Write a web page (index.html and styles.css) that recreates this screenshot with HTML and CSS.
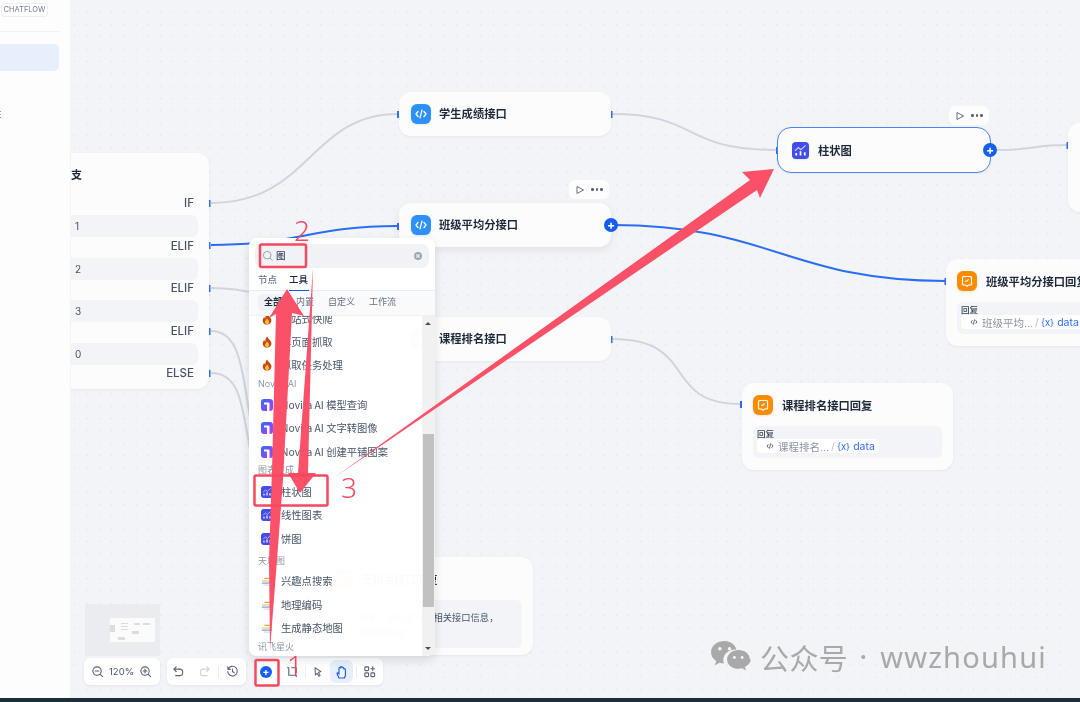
FILE: index.html
```html
<!DOCTYPE html>
<html lang="zh">
<head>
<meta charset="utf-8">
<title>Chatflow</title>
<link rel="stylesheet" href="styles.css">
</head>
<body>
<svg width="0" height="0" class="defs">
  <defs>
    <linearGradient id="nov" x1="0" y1="0" x2="1" y2="1"><stop offset="0" stop-color="#2f6bff"/><stop offset="1" stop-color="#b23cf0"/></linearGradient>
    <symbol id="i-code" viewBox="0 0 20 20"><path d="M7 7.500 5 10l2 2.500M13 7.500l2 2.500-2 2.500M11 6.200 9 13.800" fill="none" stroke="currentColor" stroke-width="1.300" stroke-linecap="round" stroke-linejoin="round"/></symbol>
    <symbol id="i-chart" viewBox="0 0 20 20"><path d="M3.500 10.500 7.500 6.500l3 2.500 5.500-5" fill="none" stroke="#c9d0ff" stroke-width="1.300"/><path d="M4 16v-3h2v3zM9 16v-5h2v5zM14 16v-4h2v4z" fill="#fff"/></symbol>
    <symbol id="i-reply" viewBox="0 0 20 20"><path d="M6.500 5.500h7a1 1 0 0 1 1 1v6.500a1 1 0 0 1-1 1h-2l-1.500 1.300L8.500 14h-2a1 1 0 0 1-1-1V6.500a1 1 0 0 1 1-1z" fill="none" stroke="#fff" stroke-width="1.200"/><path d="M8 10.300h1.800l1.800-2" fill="none" stroke="#fff" stroke-width="1.100"/></symbol>
    <symbol id="i-fire" viewBox="0 0 12 14"><path d="M6.200.5c.6 2.300 3.900 4.200 4.800 7 .8 3-1.600 6-5 6s-5.600-2.700-4.800-5.900c.3-1.200 1-2.100 1.700-2.900.1 1 .5 1.700 1.100 2.100C3.800 4.500 4.700 2 6.200.5z" fill="#c9480f"/><path d="M6.100 6.500c.9 1.200 2.300 2.300 2.300 4 0 1.500-1.100 2.500-2.400 2.500s-2.400-1-2.400-2.500c0-1.700 1.700-2.500 2.500-4z" fill="#ffb93f"/></symbol>
    <symbol id="i-nov" viewBox="0 0 12 12"><rect width="12" height="12" rx="3" fill="url(#nov)"/><path d="M3 3.500h4.500a1 1 0 0 1 1 1V12H6V5.500H3z" fill="#fff"/></symbol>
    <symbol id="i-map" viewBox="0 0 14 12"><path d="M4 3h6" stroke="#f0a33c" stroke-width="1.600"/><path d="M1 6h12" stroke="#f0b667" stroke-width="1.300"/><path d="M1 8.500h12" stroke="#7ea6dc" stroke-width="1.300"/><path d="M3 10.800h8" stroke="#bcd0ea" stroke-width="1"/></symbol>
  </defs>
</svg>
<div class="page">
  <aside class="sidebar">
    <div class="tag-row"><span class="tag">CHATFLOW</span></div>
    <div class="side-rule"></div>
    <div class="side-active"></div>
    <div class="side-clip">E</div>
  </aside>
  <main class="canvas">
    <svg class="edges" viewBox="0 0 1080 702" width="1080" height="702">
      <g fill="none" stroke="#d0d5dd" stroke-width="2">
        <path d="M211 203C310 203 310 114 398 114"/>
        <path d="M211 288C300 288 300 339 398 339"/>
        <path d="M211 331C250 331 240 400 262 470"/>
        <path d="M211 373C250 373 240 430 262 500"/>
        <path d="M612 114C700 114 680 150 777 150"/>
        <path d="M612 339C700 339 660 404 741 404"/>
        <path d="M997 150C1040 150 1030 145 1067 145"/>
      </g>
      <g fill="none" stroke="#2b6cf5" stroke-width="2">
        <path d="M211 245C300 245 310 226 398 226"/>
        <path d="M612 225C770 225 790 281 945 281"/>
      </g>
      <g fill="#2f6df6">
        <rect x="208.500" y="200" width="2" height="7"/><rect x="208.500" y="242" width="2" height="7"/><rect x="208.500" y="285" width="2" height="7"/><rect x="208.500" y="328" width="2" height="7"/><rect x="208.500" y="370" width="2" height="7"/>
        <rect x="397" y="111" width="2" height="7"/><rect x="397" y="223" width="2" height="7"/>
        <rect x="610.500" y="111" width="2" height="7"/><rect x="610.500" y="336" width="2" height="7"/>
        <rect x="776" y="147" width="2" height="7"/><rect x="944.500" y="278" width="2" height="7"/><rect x="740" y="401" width="2" height="7"/><rect x="1066.500" y="142" width="2" height="7"/>
      </g>
    </svg>

    <section class="node node-branch">
      <h3 class="branch-title">支</h3>
      <div class="port">IF</div><div class="cond">1</div>
      <div class="port">ELIF</div><div class="cond">2</div>
      <div class="port">ELIF</div><div class="cond">3</div>
      <div class="port">ELIF</div><div class="cond">0</div>
      <div class="port">ELSE</div>
    </section>

    <section class="node node-row node-student"><span class="ico ico-code"><svg><use href="#i-code"/></svg></span><h3>学生成绩接口</h3></section>
    <section class="node node-row node-avg"><span class="ico ico-code"><svg><use href="#i-code"/></svg></span><h3>班级平均分接口</h3><span class="plus">+</span></section>
    <div class="runbar runbar-avg"><svg viewBox="0 0 10 10"><path d="M2 1.500 8.500 5 2 8.500z" fill="none" stroke="#676f83" stroke-width="1"/></svg><span class="dots"><i></i><i></i><i></i></span></div>
    <section class="node node-row node-rank"><span class="ico ico-code"><svg><use href="#i-code"/></svg></span><h3>课程排名接口</h3></section>
    <section class="node node-row node-bar"><span class="ico ico-chart"><svg><use href="#i-chart"/></svg></span><h3>柱状图</h3><span class="plus">+</span></section>
    <div class="runbar runbar-bar"><svg viewBox="0 0 10 10"><path d="M2 1.500 8.500 5 2 8.500z" fill="none" stroke="#676f83" stroke-width="1"/></svg><span class="dots"><i></i><i></i><i></i></span></div>
    <section class="node node-far"></section>

    <section class="node node-reply node-reply-avg">
      <div class="reply-head"><span class="ico ico-reply"><svg><use href="#i-reply"/></svg></span><h3>班级平均分接口回复</h3></div>
      <div class="reply-body"><div class="reply-label">回复</div><div class="pill"><svg class="pill-ico"><use href="#i-code"/></svg><span>班级平均…</span><em>/</em><b class="var">{x}</b><b>data</b></div></div>
    </section>
    <section class="node node-reply node-reply-rank">
      <div class="reply-head"><span class="ico ico-reply"><svg><use href="#i-reply"/></svg></span><h3>课程排名接口回复</h3></div>
      <div class="reply-body"><div class="reply-label">回复</div><div class="pill"><svg class="pill-ico"><use href="#i-code"/></svg><span>课程排名…</span><em>/</em><b class="var">{x}</b><b>data</b></div></div>
    </section>
    <section class="node node-reply node-reply-none">
      <div class="reply-head"><span class="ico ico-reply"><svg><use href="#i-reply"/></svg></span><h3>无相关接口回复</h3></div>
      <div class="reply-body"><p>抱歉，未能查询到相关接口信息，<br>请稍后再试</p></div>
    </section>

    <div class="minimap"><div class="mini-inner"><i class="m1"></i><i class="m2"></i><i class="m3"></i><i class="m4"></i><i class="m5"></i><i class="m6"></i></div></div>

    <div class="toolbar">
      <div class="tool-panel tp-zoom">
        <svg class="tool" viewBox="0 0 14 14"><circle cx="6.500" cy="6.500" r="4.500"/><path d="M10 10l2.500 2.500M4.500 6.500h4"/></svg>
        <span class="pct">120%</span>
        <svg class="tool" viewBox="0 0 14 14"><circle cx="6.500" cy="6.500" r="4.500"/><path d="M10 10l2.500 2.500M4.500 6.500h4M6.500 4.500v4"/></svg>
      </div>
      <div class="tool-panel tp-hist">
        <svg class="tool" viewBox="0 0 14 14"><path d="M4.500 2 2 4.500 4.500 7M2 4.500h6a3.500 3.500 0 0 1 0 7H4"/></svg>
        <svg class="tool tool-off" viewBox="0 0 14 14"><path d="M9.500 2 12 4.500 9.500 7M12 4.500H6a3.500 3.500 0 0 0 0 7h4"/></svg>
        <span class="sep"></span>
        <svg class="tool" viewBox="0 0 14 14"><path d="M2.200 4.500A5.200 5.200 0 1 1 1.800 7M2 2v2.700h2.700M7 4.500V7l1.800 1.300"/></svg>
      </div>
      <div class="tool-panel tp-ops">
        <span class="add-btn">+</span>
        <svg class="tool" viewBox="0 0 14 14"><path d="M3 3.500V11h7.500M1.500 3H3M11 11v1.500M6 3h5v5"/></svg>
        <span class="sep"></span>
        <svg class="tool tool-sm" viewBox="0 0 14 14"><path d="M3.500 2l7 4.500-3 1 2 3.500-1.500 1-2-3.500-2 2z"/></svg>
        <span class="hand"><svg viewBox="0 0 14 14"><path d="M4 13 2 8.500c.3-1 1.300-.8 2 .2V3.500a.8.800 0 0 1 1.600 0V2.300a.8.800 0 0 1 1.600 0v1a.8.800 0 0 1 1.600.2v1a.8.800 0 0 1 1.600.2V10c0 1.500-.6 2.300-1.200 3z"/></svg></span>
        <span class="sep"></span>
        <svg class="tool" viewBox="0 0 14 14"><rect x="2" y="2" width="4" height="4" rx=".8"/><rect x="2" y="8.500" width="4" height="4" rx=".8"/><rect x="8.500" y="8.500" width="4" height="4" rx=".8"/><path d="M10.500 2v4M8.500 4h4"/></svg>
      </div>
    </div>

    <div class="popup">
      <div class="search">
        <svg class="search-ico" viewBox="0 0 12 12"><circle cx="5.200" cy="5.200" r="3.800"/><path d="M8 8l2.500 2.500"/></svg>
        <span class="search-text">图</span>
        <span class="clear">×</span>
      </div>
      <div class="tabs"><span>节点</span><span class="tab-on">工具</span></div>
      <div class="subtabs"><span class="sub-on">全部</span><span>内置</span><span>自定义</span><span>工作流</span></div>
      <div class="list-wrap">
        <div class="list">
          <div class="row"><svg class="r-ico"><use href="#i-fire"/></svg><span>全站式快爬</span></div>
          <div class="row"><svg class="r-ico"><use href="#i-fire"/></svg><span>单页面抓取</span></div>
          <div class="row"><svg class="r-ico"><use href="#i-fire"/></svg><span>抓取任务处理</span></div>
          <div class="group group-first">Novita AI</div>
          <div class="row"><svg class="r-ico"><use href="#i-nov"/></svg><span>Novita AI 模型查询</span></div>
          <div class="row"><svg class="r-ico"><use href="#i-nov"/></svg><span>Novita AI 文字转图像</span></div>
          <div class="row"><svg class="r-ico"><use href="#i-nov"/></svg><span>Novita AI 创建平铺图案</span></div>
          <div class="group">图表生成</div>
          <div class="row"><span class="r-chart"><svg><use href="#i-chart"/></svg></span><span>柱状图</span></div>
          <div class="row"><span class="r-chart"><svg><use href="#i-chart"/></svg></span><span>线性图表</span></div>
          <div class="row"><span class="r-chart"><svg><use href="#i-chart"/></svg></span><span>饼图</span></div>
          <div class="group group-tall">天地图</div>
          <div class="row"><svg class="r-ico"><use href="#i-map"/></svg><span>兴趣点搜索</span></div>
          <div class="row"><svg class="r-ico"><use href="#i-map"/></svg><span>地理编码</span></div>
          <div class="row"><svg class="r-ico"><use href="#i-map"/></svg><span>生成静态地图</span></div>
          <div class="group">讯飞星火</div>
        </div>
        <div class="scrollbar"><span class="up"></span><span class="thumb"></span><span class="down"></span></div>
      </div>
    </div>

    <div class="watermark">
      <svg class="wechat" viewBox="0 0 42 34"><path d="M15 1C7 1 1 6 1 12.500c0 3.800 2 6.900 5.200 9.100L5 26l4.800-2.500c1.400.4 2.900.6 4.400.6-.4-1.200-.6-2.400-.6-3.600 0-6 5.500-10.800 12.600-10.800h.9C25.800 4.700 20.900 1 15 1z" fill="#a9a9a9"/><path d="M41 20c0-5.300-5.200-9.700-11.700-9.700S17.500 14.700 17.500 20s5.300 9.700 11.800 9.700c1.300 0 2.600-.2 3.800-.5l3.800 2.100-1-3.500c3-1.900 6-4.800 6-7.800z" fill="#a9a9a9"/><circle cx="10" cy="9" r="1.800" fill="#f2f4f7"/><circle cx="20" cy="9" r="1.800" fill="#f2f4f7"/><circle cx="25" cy="18" r="1.500" fill="#f2f4f7"/><circle cx="33" cy="18" r="1.500" fill="#f2f4f7"/></svg>
      <span class="wm-cn">公众号</span><span class="wm-dot">·</span><span class="wm-en">wwzhouhui</span>
    </div>

    <svg class="marks" viewBox="0 0 1080 702" width="1080" height="702">
      <g fill="#fb5168">
        <path d="M287 289 304 316 292 313 283 480 277 560 270 650 269 560 272 470 276 314 269 318z"/>
        <path d="M313 268 308 473 316 473 300 493 288 473 298 473z"/>
        <path d="M335 477 750 180 742 172 774 169 760 198 757 190z"/>
      </g>
      <g fill="none" stroke="#f4485f" stroke-width="2.500">
        <rect x="260" y="244.500" width="46" height="22.500" rx="1.500"/>
        <rect x="254.500" y="475.500" width="73" height="30" rx="1.500"/>
        <rect x="255.500" y="660" width="23" height="25.500" rx="1.500"/>
      </g>
    </svg>
    <span class="num num-2">2</span>
    <span class="num num-3">3</span>
    <span class="num num-1">1</span>
  </main>
  <footer class="taskbar"></footer>
</div>
</body>
</html>
```
FILE: styles.css
```css
* { box-sizing: border-box; }
html, body { margin: 0; padding: 0; }
body {
  width: 1080px; height: 702px; overflow: hidden;
  font-family: "Inter", "Noto Sans CJK SC", sans-serif;
  color: #354052;
}
.defs { position: absolute; }
.page { width: 1080px; height: 702px; display: grid; grid-template-columns: 71px 1fr; grid-template-rows: 698px 4px; filter: blur(.35px); }
.taskbar { grid-column: 1 / 3; background: #1c2f38; }

.sidebar { background: #fdfdfe; border-right: 1px solid #f2f3f5; overflow: hidden; position: relative; z-index: 3; }
.tag-row { height: 32px; padding: 3px 0 0 1px; border-bottom: 1px solid #f0f1f3; width: 60px; }
.tag { display: block; width: 47px; height: 14px; line-height: 13px; border: 1px solid #eceef1; border-radius: 3px; background: #fff; font: 7.500px/12px "Inter", sans-serif; color: #737b8c; text-align: center; }
.side-active { width: 59px; height: 27px; margin-top: 12px; background: #e8effc; border-radius: 0 5px 5px 0; }
.side-clip { margin: 38px 0 0 -4px; font-size: 9px; line-height: 12px; color: #475467; }

.canvas {
  position: relative; overflow: hidden;
  background-color: #f2f4f7;
  background-image: radial-gradient(circle, #dfe2e8 .7px, transparent 1px);
  background-size: 12.320px 12.320px;
  background-position: -2.500px 6px;
  width: 1009px;
}
.edges, .marks { position: absolute; left: -71px; top: 0; pointer-events: none; }
.marks { z-index: 6; }

.node { position: absolute; background: #fcfcfd; border-radius: 12px; box-shadow: 0 1px 3px rgba(16,24,40,.05); }
.node h3 { margin: 0; font-size: 11.300px; font-weight: 600; color: #1d2939; font-family: "Noto Sans CJK SC", sans-serif; white-space: nowrap; }
.node-row { display: flex; align-items: center; gap: 8px; padding: 0 12px; height: 44px; width: 212px; }
.node-row h3 { padding-bottom: 2px; }
.node-student { left: 328px; top: 92px; }
.node-avg { left: 328px; top: 203px; box-shadow: 0 3px 8px rgba(16,24,40,.08); }
.node-rank { left: 328px; top: 317px; }
.node-bar { left: 706px; top: 127px; width: 214px; height: 46px; border: 1px solid #4b82f7; border-radius: 14px; padding: 0 14px; }
.node-bar h3 { margin-left: 1px; padding-bottom: 0; }
.node-far { left: 997px; top: 123px; width: 60px; height: 89px; }

.ico { width: 20px; height: 20px; border-radius: 6px; display: flex; flex: none; box-shadow: 0 1px 2px rgba(16,24,40,.1); }
.ico svg { width: 20px; height: 20px; }
.ico-code { background: #2e90fa; color: #fff; }
.ico-chart { background: #444ce7; width: 17px; height: 17px; border-radius: 4px; }
.ico-chart svg { width: 17px; height: 17px; }
.ico-reply { background: #fb8c00; }

.plus { position: absolute; right: -7px; top: 50%; margin-top: -7px; width: 14px; height: 14px; border-radius: 50%; background: #155eef; color: #fff; font: 700 12px/13px "Inter", sans-serif; text-align: center; }

.runbar { position: absolute; display: flex; align-items: center; gap: 6px; width: 40px; height: 19px; padding: 0 7px 0 6px; background: #fdfdfe; border-radius: 6px; }
.runbar svg { width: 10px; height: 10px; flex: none; }
.runbar-avg { left: 498px; top: 180px; }
.runbar-bar { left: 878px; top: 106px; }
.dots { display: flex; gap: 2px; }
.dots i { width: 2.500px; height: 2.500px; border-radius: 50%; background: #5b6474; }

.node-branch { left: -71px; top: 153px; width: 209px; height: 236px; padding: 15px 11px 0 0; text-align: right; }
.node .branch-title { position: absolute; left: 71px; top: 13px; font-size: 11px; padding: 0; }
.port { height: 16px; font-size: 11.500px; line-height: 16px; color: #475467; font-weight: 500; padding-right: 4px; margin-bottom: 4px; }
.node-branch .port:first-of-type { margin-top: 27px; }
.cond { height: 22px; background: #f2f4f7; border-radius: 6px; text-align: left; padding-left: 75px; font-size: 10px; line-height: 22px; color: #475467; margin-bottom: .5px; }

.node-reply { padding: 11px; }
.reply-head { display: flex; align-items: center; gap: 9px; height: 21px; }
.reply-body { margin-top: 11px; background: #f2f4f7; border-radius: 6px; padding: 2px 4px 5px; }
.reply-label { font-size: 8.500px; line-height: 11px; font-family: "Noto Sans CJK SC", sans-serif; color: #354052; font-weight: 500; }
.pill { display: flex; width: fit-content; align-items: center; gap: 2px; height: 14px; background: #fff; border-radius: 4px; padding: 0 4px 0 7px; font-size: 10.500px; color: #8a93a3; font-family: "Inter", "Noto Sans CJK SC", sans-serif; white-space: nowrap; }
.pill em { font-style: normal; color: #b8bec9; }
.pill b { font-weight: 400; color: #2f6df6; }
.pill .var { font-size: 9.500px; margin-right: 1px; }
.pill-ico { width: 12px; height: 12px; color: #354052; flex: none; }
.node-reply-avg { left: 875px; top: 259px; width: 212px; height: 87px; }
.node-reply-rank { left: 671px; top: 383px; width: 211px; height: 87px; }
.node-reply-none { left: 251px; top: 557px; width: 211px; height: 98px; }
.node-reply-none h3 { font-size: 10.800px; }
.reply-body p { margin: 0; padding: 8px 6px 4px 22px; font-size: 9.300px; line-height: 15px; color: #475467; height: 41px; font-family: "Noto Sans CJK SC", sans-serif; white-space: nowrap; }

.minimap { position: absolute; left: 14px; top: 604px; width: 75px; height: 52px; background: #ebecef; }
.mini-inner { position: absolute; left: 25px; top: 14px; width: 45px; height: 24px; background: #fbfbfb; }
.mini-inner i { position: absolute; height: 2px; background: #dadce0; }
.m1 { left: 0; top: 7px; width: 5px; height: 7px !important; }
.m2 { left: 11px; top: 5px; width: 7px; height: 9px !important; background: repeating-linear-gradient(#dadce0 0 1px, transparent 1px 3px) !important; }
.m3 { left: 24px; top: 5px; width: 6px; }
.m4 { left: 33px; top: 5px; width: 7px; }
.m5 { left: 22px; top: 13px; width: 7px; height: 3px !important; }
.m6 { left: 8px; top: 19px; width: 7px; height: 3px !important; }

.toolbar { position: absolute; left: 13px; top: 658px; display: flex; gap: 7px; height: 27px; }
.tool-panel { display: flex; align-items: center; background: #fff; border-radius: 6px; box-shadow: 0 1px 3px rgba(16,24,40,.07); height: 27px; }
.tp-zoom { width: 76px; gap: 5px; padding: 0 7px; }
.tp-hist { width: 79px; gap: 7px; padding: 0 5px; }
.tp-hist .tool-off { margin-left: 6px; }
.tp-ops { width: 129px; margin-left: 1px; padding: 0 7px 0 6px; gap: 6px; position: relative; }
.pct { font-size: 9.500px; color: #475467; white-space: nowrap; }
.tool { width: 13px; height: 13px; flex: none; fill: none; stroke: #5b6474; stroke-width: 1.200; stroke-linecap: round; stroke-linejoin: round; }
.tool-off { stroke: #d0d5dd; }
.tool-sm { width: 12px; height: 12px; }
.sep { width: 1px; height: 12px; background: #eaecf0; flex: none; }
.add-btn { width: 12px; height: 12px; border-radius: 50%; background: #155eef; color: #fff; font: 700 10px/11px "Inter", sans-serif; text-align: center; flex: none; margin-right: 8px; }
.hand { width: 23px; height: 23px; border-radius: 6px; background: #e8effc; display: flex; align-items: center; justify-content: center; flex: none; margin-right: -3px; }
.hand svg { width: 14px; height: 14px; fill: #fff; stroke: #155eef; stroke-width: 1.200; }

.popup { position: absolute; left: 178px; top: 238px; width: 186px; height: 418px; background: rgba(255,255,255,.98); border-radius: 8px; box-shadow: 0 4px 10px rgba(16,24,40,.12); z-index: 4; overflow: hidden; display: flex; flex-direction: column; }
.search { margin: 6px 6px 0; height: 24px; background: #f0f2f5; border-radius: 8px; display: flex; align-items: center; padding: 0 7px 3px 7px; flex: none; }
.search-ico { width: 12px; height: 12px; fill: none; stroke: #98a2b3; stroke-width: 1; flex: none; margin-top: 3px; }
.search-text { margin-left: 2px; font: 500 9.500px/12px "Noto Sans CJK SC", sans-serif; color: #354052; flex: 1; }
.clear { width: 8px; height: 8px; border-radius: 50%; background: #a0a6b1; color: #f0f2f5; font: 700 8px/8px "Inter", sans-serif; text-align: center; margin-top: 3px; }
.tabs { height: 23px; display: flex; gap: 11px; padding: 3px 0 0 9px; border-bottom: 1px solid #eaecf0; font: 500 9.500px/16px "Noto Sans CJK SC", sans-serif; color: #676f83; flex: none; }
.tabs span { height: 22px; width: 20px; white-space: nowrap; }
.tab-on { color: #1d2939; border-bottom: 1.500px solid #155eef; height: 20px !important; }
.subtabs { height: 25px; background: #f9fafb; display: flex; gap: 14px; padding: 3px 0 0 9px; font: 9px/16px "Noto Sans CJK SC", sans-serif; color: #676f83; flex: none; border-bottom: 1px solid #f0f1f3; }
.sub-on { background: #eff1f5; border-radius: 5px; padding: 0 6px; margin-right: -6px; height: 17px; font-weight: 700; color: #1d2939; }
.list-wrap { flex: 1; position: relative; overflow: hidden; }
.list { margin-top: -9px; padding-left: 12px; }
.row { height: 23.400px; display: flex; align-items: center; gap: 8px; font: 10.300px/14px "Noto Sans CJK SC", "Inter", sans-serif; color: #475467; white-space: nowrap; }
.r-ico { width: 12px; height: 12px; flex: none; }
.r-chart { width: 12px; height: 12px; border-radius: 3px; background: #444ce7; display: flex; flex: none; }
.r-chart svg { width: 12px; height: 12px; }
.group { height: 17px; margin-left: -3px; font: 9px/14px "Inter", "Noto Sans CJK SC", sans-serif; color: #8e96a5; }
.group-first { height: 16px; }
.group-tall { height: 19px; line-height: 19px; }
.scrollbar { position: absolute; right: 0; top: 0; bottom: 0; width: 13px; background: #f1f1f1; }
.up, .down, .thumb { position: absolute; }
.thumb { top: 118px; height: 173px; width: 11px; left: 1px; background: #c1c1c1; }
.up { top: 6px; left: 3px; border: 3px solid transparent; border-top: 0; border-bottom: 3.500px solid #505050; }
.down { bottom: 6px; left: 3px; border: 3px solid transparent; border-bottom: 0; border-top: 3.500px solid #505050; }

.watermark { position: absolute; left: 639px; top: 636px; display: flex; align-items: center; height: 42px; color: #a9a9a9; white-space: nowrap; z-index: 2; }
.wechat { width: 41px; height: 33px; margin-right: 9px; flex: none; margin-top: -2px; }
.wm-cn { font: 29px/42px "Noto Sans CJK SC", sans-serif; letter-spacing: .4px; }
.wm-dot { font: 700 24px/42px "Inter", sans-serif; margin: 0 13px 0 11px; }
.wm-en { font: 29px/42px "Noto Sans", sans-serif; letter-spacing: 1.200px; }

.num { position: absolute; z-index: 7; color: #f4485f; font-family: "Noto Sans", sans-serif; font-weight: 300; font-size: 28px; line-height: 28px; }
.num-2 { left: 223px; top: 216px; }
.num-3 { left: 270px; top: 473px; }
.num-1 { left: 216px; top: 651px; }
```
